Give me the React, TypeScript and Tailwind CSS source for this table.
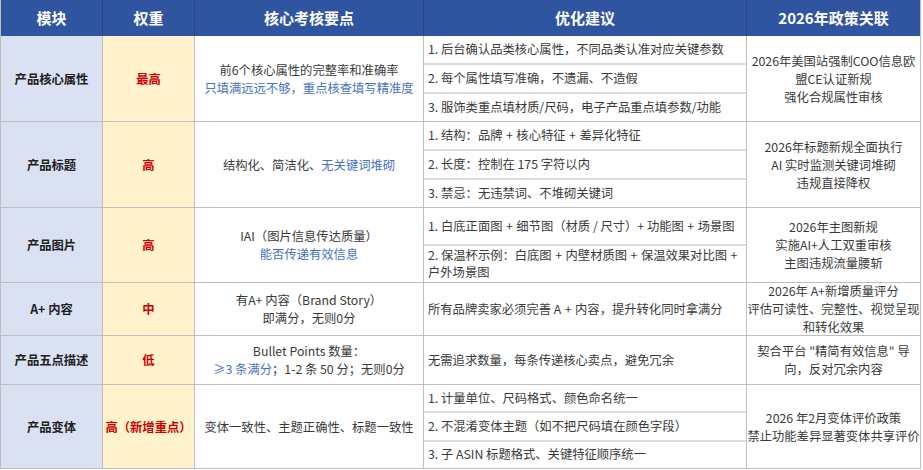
import React from 'react';

type Row = {
  name: string;
  weight: string;
  h: string;
  core: React.ReactNode;
  tips: string[];
  tipH?: string[];
  policy: string[];
};

const blue = 'text-[#4472c4]';

const rows: Row[] = [
  {
    name: '产品核心属性',
    weight: '最高',
    h: 'h-[85px]',
    core: (
      <>
        <div>前6个核心属性的完整率和准确率</div>
        <div className={blue}>只填满远远不够，重点核查填写精准度</div>
      </>
    ),
    tips: [
      '1. 后台确认品类核心属性，不同品类认准对应关键参数',
      '2. 每个属性填写准确，不遗漏、不造假',
      '3. 服饰类重点填材质/尺码，电子产品重点填参数/功能',
    ],
    policy: ['2026年美国站强制COO信息欧', '盟CE认证新规', '强化合规属性审核'],
  },
  {
    name: '产品标题',
    weight: '高',
    h: 'h-[86px]',
    core: (
      <div>
        结构化、简洁化、<span className={blue}>无关键词堆砌</span>
      </div>
    ),
    tips: ['1. 结构：品牌 + 核心特征 + 差异化特征', '2. 长度：控制在 175 字符以内', '3. 禁忌：无违禁词、不堆砌关键词'],
    policy: ['2026年标题新规全面执行', 'AI 实时监测关键词堆砌', '违规直接降权'],
  },
  {
    name: '产品图片',
    weight: '高',
    h: 'h-[75px]',
    core: (
      <>
        <div>IAI（图片信息传达质量）</div>
        <div className={blue}>能否传递有效信息</div>
      </>
    ),
    tips: [
      '1. 白底正面图 + 细节图（材质 / 尺寸）+ 功能图 + 场景图',
      '2. 保温杯示例：白底图 + 内壁材质图 + 保温效果对比图 + 户外场景图',
    ],
    tipH: ['h-[36px]', 'flex-1'],
    policy: ['2026年主图新规', '实施AI+人工双重审核', '主图违规流量腰斩'],
  },
  {
    name: 'A+ 内容',
    weight: '中',
    h: 'h-[53px]',
    core: (
      <>
        <div>有A+ 内容（Brand Story）</div>
        <div>即满分，无则0分</div>
      </>
    ),
    tips: ['所有品牌卖家必须完善 A + 内容，提升转化同时拿满分'],
    policy: ['2026年 A+新增质量评分', '评估可读性、完整性、视觉呈现', '和转化效果'],
  },
  {
    name: '产品五点描述',
    weight: '低',
    h: 'h-[49px]',
    core: (
      <>
        <div>Bullet Points 数量：</div>
        <div>
          <span className={blue}>≥3 条满分</span>；1-2 条 50 分；无则0分
        </div>
      </>
    ),
    tips: ['无需追求数量，每条传递核心卖点，避免冗余'],
    policy: ['契合平台 "精简有效信息" 导', '向，反对冗余内容'],
  },
  {
    name: '产品变体',
    weight: '高（新增重点）',
    h: 'h-[84px]',
    core: <div>变体一致性、主题正确性、标题一致性</div>,
    tips: ['1. 计量单位、尺码格式、颜色命名统一', '2. 不混淆变体主题（如不把尺码填在颜色字段）', '3. 子 ASIN 标题格式、关键特征顺序统一'],
    policy: ['2026 年2月变体评价政策', '禁止功能差异显著变体共享评价'],
  },
];

// widen the " + " joins a hair, the source renders them a little looser
const loose = (t: string) => t.split(' + ').join(' \u200a+\u200a ');

export default function App() {
  return (
    <div
      className="w-[923px] h-[470px] bg-white text-[12.3px] leading-[18px] text-[#3a3a3a]"
      style={{ fontFamily: '"Noto Sans CJK SC", "Noto Sans", sans-serif' }}
    >
      <div className="w-[921px] border-l border-r border-b border-[#bfbfbf]">
        {/* header */}
        <div className="flex h-[36px] bg-[#2f54a0] text-white font-bold text-[15px]">
          <div className="w-[102px] flex items-center justify-center border-r border-[#26458a]">模块</div>
          <div className="w-[92px] flex items-center justify-center border-r border-[#26458a]">权重</div>
          <div className="w-[229px] flex items-center justify-center border-r border-[#26458a]">核心考核要点</div>
          <div className="w-[323px] flex items-center justify-center border-r border-[#26458a]">优化建议</div>
          <div className="flex-1 flex items-center justify-center">2026年政策关联</div>
        </div>

        {rows.map((r, i) => (
          <div key={i} className={`flex ${r.h} ${i > 0 ? 'border-t border-[#bfbfbf]' : ''}`}>
            <div className="w-[102px] bg-[#d9e1f2] border-r border-[#bfbfbf] flex items-center justify-center font-bold text-[#222]">
              {r.name}
            </div>
            <div className="w-[92px] bg-[#fff2cc] border-r border-[#bfbfbf] flex items-center justify-center font-bold text-[#d00000]">
              {r.weight}
            </div>
            <div className="w-[229px] border-r border-[#bfbfbf] flex flex-col items-center justify-center text-center">
              {r.core}
            </div>
            <div className="w-[323px] border-r border-[#bfbfbf] flex flex-col leading-[17px]">
              {r.tips.map((t, j) => (
                <div
                  key={j}
                  className={`${r.tipH ? r.tipH[j] : 'flex-1'} flex items-center px-[4px] ${
                    j > 0 ? 'border-t-2 border-[#dcdcdc]' : ''
                  }`}
                >
                  <span>{loose(t)}</span>
                </div>
              ))}
            </div>
            <div className="flex-1 flex flex-col items-center justify-center text-center">
              {r.policy.map((p, j) => (
                <div key={j}>{p}</div>
              ))}
            </div>
          </div>
        ))}
      </div>
    </div>
  );
}
